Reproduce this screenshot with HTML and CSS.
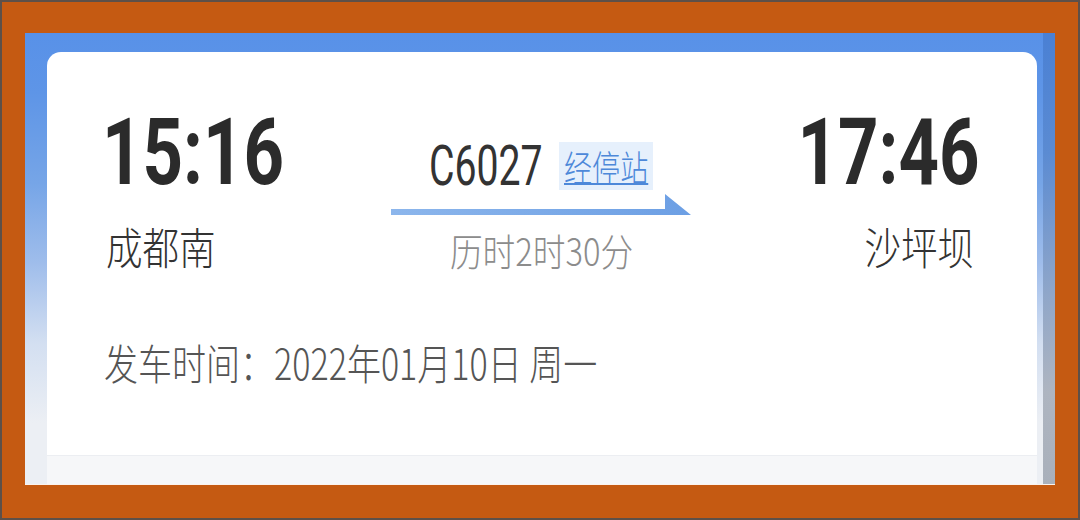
FILE: index.html
```html
<!DOCTYPE html>
<html lang="zh-CN">
<head>
    <meta charset="utf-8">
    <title>车次详情</title>
    <link rel="stylesheet" href="styles.css">
</head>
<body>
    <div class="frame">
        <div class="screen">
            <div class="content">
                <div class="card">
                    <div class="route">
                        <div class="stop">
                            <span class="time">15:16</span>
                            <span class="station">成都南</span>
                        </div>
                        <div class="train">
                            <div class="train-row">
                                <div class="code"><span>C6027</span></div>
                                <a class="stops" href="#"><span>经停站</span></a>
                            </div>
                            <svg class="arrow" width="300" height="22" viewBox="0 0 300 22">
                                <defs>
                                    <linearGradient id="arrowFill" x1="0" x2="1" y1="0" y2="0">
                                        <stop offset="0" stop-color="#8cb6ec"/>
                                        <stop offset="1" stop-color="#6c9fe4"/>
                                    </linearGradient>
                                </defs>
                                <path d="M0 15 H274 V0 L300 21 H0 Z" fill="url(#arrowFill)"/>
                            </svg>
                            <div class="duration"><span>历时2时30分</span></div>
                        </div>
                        <div class="stop stop-end">
                            <span class="time">17:46</span>
                            <span class="station">沙坪坝</span>
                        </div>
                    </div>
                    <p class="depart"><span>发车时间：2022年01月10日 周一</span></p>
                </div>
                <div class="next-card"></div>
            </div>
            <div class="scrollbar"></div>
        </div>
    </div>
</body>
</html>
```

FILE: styles.css
```css
body {
    margin: 0;
    width: 1080px;
    height: 520px;
    font-family: "Noto Sans CJK SC", "Roboto", sans-serif;
    font-weight: 300;
    color: #333;
}
.frame {
    box-sizing: border-box;
    height: 520px;
    border: 2px solid #5d5049;
    background-color: #c55a12;
    padding: 31px 23px 33px;
}
.screen {
    box-sizing: border-box;
    height: 100%;
    display: flex;
    border-bottom: 1px solid #fbf3ee;
    background: linear-gradient(180deg, #5891e8 0, #5e95e7 60px, #76a5e7 150px, #9fbdeb 230px, #d3dff1 310px, #eceff4 390px);
}
.content {
    flex: 1;
    display: flex;
    flex-direction: column;
    padding: 19px 6px 0 22px;
}
.scrollbar {
    width: 12px;
    background: linear-gradient(180deg, #4a80d4 0, #5b8bd2 120px, #8fa6c9 260px, #aeb5c0 360px, #a9b0bb 100%);
}
.card {
    flex: 1;
    background-color: #fff;
    border-radius: 14px 14px 0 0;
    padding: 54px 57px 0 55px;
}
.next-card {
    height: 28px;
    background-color: #f6f7f9;
    border-top: 1px solid #eceef2;
}
.route {
    display: grid;
    grid-template-columns: 1fr auto 1fr;
    align-items: start;
}
.stop {
    display: flex;
    flex-direction: column;
    align-items: flex-start;
}
.stop-end {
    align-items: flex-end;
}
.time {
    font: 700 93px/1 "Roboto", sans-serif;
    color: #2b2b2b;
    transform: scaleX(.76);
    transform-origin: left;
}
.station {
    margin: 25px 0 0 4px;
    font-size: 44px;
    line-height: 1;
    color: #333;
    transform: scaleX(.83);
    transform-origin: left;
}
.stop-end .time,
.stop-end .station {
    transform-origin: right;
}
.stop-end .station {
    margin: 25px 6px 0 0;
}
.train {
    margin-top: 36px;
    display: flex;
    flex-direction: column;
    align-items: center;
}
.train-row {
    display: flex;
    align-items: flex-start;
}
.code {
    width: 109px;
    margin-right: 21px;
    white-space: nowrap;
    font: 400 56px/48px "Roboto", sans-serif;
    color: #333;
}
.code span,
.stops span,
.duration span,
.depart span {
    display: inline-block;
    white-space: nowrap;
}
.code span {
    transform: scaleX(.7);
    transform-origin: left;
}
.stops {
    box-sizing: border-box;
    width: 94px;
    height: 48px;
    padding-left: 5px;
    background-color: #e6f0fc;
    color: #4d88d9;
    font-size: 36px;
    line-height: 48px;
    white-space: nowrap;
}
.stops span {
    transform: scaleX(.78);
    transform-origin: left;
    text-decoration: underline;
    text-decoration-thickness: 2px;
}
.arrow {
    display: block;
    margin-top: 4px;
}
.duration {
    margin-top: 15px;
    font-size: 38px;
    line-height: 1;
    color: #8c8c8c;
}
.duration span {
    transform: scaleX(.86);
}
.depart {
    margin: 72px 0 0 2px;
    font-size: 42px;
    line-height: 1;
    color: #555;
}
.depart span {
    transform: scaleX(.81);
    transform-origin: left;
}
```
